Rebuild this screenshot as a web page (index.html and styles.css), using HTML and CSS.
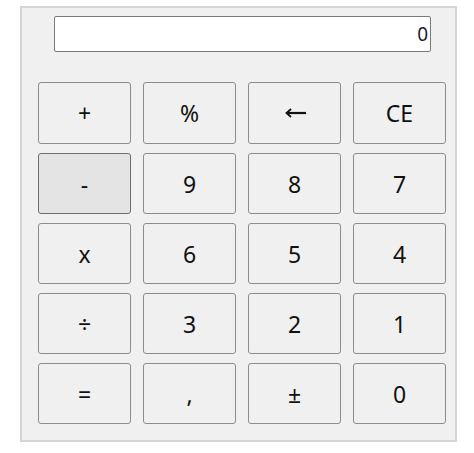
FILE: index.html
```html
<!DOCTYPE html>
<html lang="en">
<head>
    <meta charset="UTF-8">
    <title>Calculator</title>
    <link rel="stylesheet" href="styles.css">
</head>
<body>
    <div class="calc">
        <div class="display-row">
            <input type="text" class="display" value="0" readonly>
        </div>
        <div class="keys">
            <button class="key">+</button>
            <button class="key">%</button>
            <button class="key" aria-label="Backspace">
                <svg class="arrow" width="22" height="10" viewBox="0 0 22 10">
                    <path d="M21 5H3" stroke="#111" stroke-width="2.2" fill="none"/>
                    <path d="M6 1L1.5 5L6 9" stroke="#111" stroke-width="1.8" fill="none"/>
                </svg>
            </button>
            <button class="key">CE</button>

            <button class="key active">-</button>
            <button class="key">9</button>
            <button class="key">8</button>
            <button class="key">7</button>

            <button class="key">x</button>
            <button class="key">6</button>
            <button class="key">5</button>
            <button class="key">4</button>

            <button class="key">&divide;</button>
            <button class="key">3</button>
            <button class="key">2</button>
            <button class="key">1</button>

            <button class="key">=</button>
            <button class="key">,</button>
            <button class="key">&plusmn;</button>
            <button class="key">0</button>
        </div>
    </div>
</body>
</html>
```

FILE: styles.css
```css
* {
    box-sizing: border-box;
    margin: 0;
    padding: 0;
}

body {
    font-family: 'Noto Sans', 'Open Sans', sans-serif;
    background: #fff;
    color: #111;
}

.calc {
    width: 437px;
    height: 436px;
    margin: 6px 0 0 20px;
    background: #f0f0f0;
    border: 2px solid #d4d4d4;
}

.display-row {
    padding: 8px 0 0 32px;
}

.display {
    display: block;
    width: 377px;
    height: 36px;
    padding: 0 2px 0 5px;
    border: 1px solid #7a7a7a;
    border-radius: 2px;
    background: #fff;
    font-family: 'Noto Sans', sans-serif;
    font-size: 19px;
    color: #1c1c30;
    text-align: right;
    outline: none;
}

.keys {
    display: grid;
    grid-template-columns: repeat(4, 93px);
    grid-template-rows: 62px repeat(4, 61px);
    column-gap: 12px;
    row-gap: 9px;
    padding: 30px 0 0 16px;
}

.key {
    display: flex;
    align-items: center;
    justify-content: center;
    border: 1px solid #8c8c8c;
    border-radius: 3px;
    background: #f0f0f0;
    font-family: 'Noto Sans', sans-serif;
    font-size: 23px;
    color: #111;
    cursor: pointer;
}

.key.active {
    background: #e4e4e4;
    border-color: #6e6e6e;
}

.arrow {
    display: block;
    margin-left: 3px;
}
```
